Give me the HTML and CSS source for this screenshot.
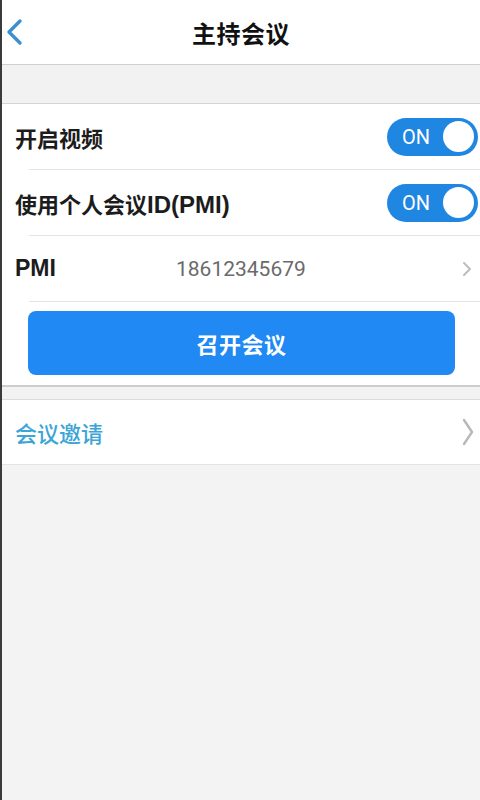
FILE: index.html
```html
<!DOCTYPE html>
<html lang="zh-CN">
<head>
<meta charset="utf-8">
<title>主持会议</title>
<link rel="stylesheet" href="styles.css">
</head>
<body>
<div class="screen">
  <header class="topbar">
    <svg class="back" width="20" height="28" viewBox="0 0 20 28"><path d="M15 3 L4 14 L15 25" fill="none" stroke="#3d8fd1" stroke-width="3.4" stroke-linecap="round" stroke-linejoin="round"/></svg>
    <h1 class="title">主持会议</h1>
  </header>
  <div class="band"></div>
  <section class="group">
    <div class="row">
      <span class="label">开启视频</span>
      <div class="toggle"><span class="on">ON</span><span class="knob"></span></div>
    </div>
    <div class="sep"></div>
    <div class="row">
      <span class="label">使用个人会议<span class="latin">ID(PMI)</span></span>
      <div class="toggle"><span class="on">ON</span><span class="knob"></span></div>
    </div>
    <div class="sep"></div>
    <div class="row">
      <span class="label pmi">PMI</span>
      <span class="value">18612345679</span>
      <svg class="chev-small" width="10" height="16" viewBox="0 0 10 16"><path d="M2 2 L8 8 L2 14" fill="none" stroke="#bdbdbd" stroke-width="2" stroke-linecap="round" stroke-linejoin="round"/></svg>
    </div>
    <div class="sep"></div>
    <div class="btn-wrap">
      <div class="btn">召开会议</div>
    </div>
  </section>
  <div class="band2"></div>
  <section class="group2">
    <div class="row invite">
      <span class="label link">会议邀请</span>
      <svg class="chev-big" width="12" height="28" viewBox="0 0 12 28"><path d="M2 2 L10 14 L2 26" fill="none" stroke="#b8b8b8" stroke-width="2.4" stroke-linecap="round" stroke-linejoin="round"/></svg>
    </div>
  </section>
</div>
</body>
</html>
```

FILE: styles.css
```css
html, body {
  margin: 0;
  padding: 0;
  background: #f3f3f3;
}
body {
  font-family: "Noto Sans CJK SC", "Noto Sans", sans-serif;
  color: #151515;
}
.screen {
  width: 478px;
  min-height: 800px;
  border-left: 2px solid #3a3a3a;
  background: #f3f3f3;
}
.topbar {
  height: 64px;
  background: #fff;
  border-bottom: 1px solid #cfcfcf;
  display: flex;
  align-items: center;
  justify-content: center;
  position: relative;
}
.back {
  position: absolute;
  left: 3px;
  top: 18px;
}
.title {
  margin: 0;
  font-size: 24px;
  font-weight: 700;
  color: #111;
  letter-spacing: 0.5px;
}
.band {
  height: 38px;
  background: #f2f2f2;
  border-bottom: 1px solid #d4d4d4;
}
.group {
  background: #fff;
  border-bottom: 2px solid #cdcdcd;
}
.row {
  height: 65px;
  display: flex;
  align-items: center;
  padding-left: 13px;
  padding-right: 2px;
}
.sep {
  height: 1px;
  background: #e4e4e4;
  margin-left: 27px;
}
.label {
  font-size: 22px;
  font-weight: 700;
  color: #1c1c1c;
  flex: none;
}
.latin {
  font-family: "Liberation Sans", "Noto Sans", sans-serif;
  font-size: 24px;
  font-weight: 700;
}
.pmi {
  font-family: "Liberation Sans", "Noto Sans", sans-serif;
  font-weight: 700;
  font-size: 23px;
  width: 161px;
}
.value {
  font-family: "Roboto", "Noto Sans", sans-serif;
  font-size: 21px;
  color: #6a6a6a;
  flex: 1;
}
.chev-small {
  margin-right: 6px;
}
.toggle {
  margin-left: auto;
  width: 91px;
  height: 38px;
  border-radius: 19px;
  background: #1f86e2;
  display: flex;
  align-items: center;
  justify-content: space-between;
  padding: 0 4px 0 15px;
  box-sizing: border-box;
}
.on {
  font-family: "Roboto", "Noto Sans", sans-serif;
  color: #fff;
  font-size: 20px;
}
.knob {
  width: 31px;
  height: 31px;
  border-radius: 50%;
  background: #fff;
}
.btn-wrap {
  padding: 9px 25px 10px 26px;
}
.btn {
  height: 64px;
  border-radius: 8px;
  background: #2189f3;
  color: #fff;
  font-size: 22px;
  font-weight: 700;
  display: flex;
  align-items: center;
  justify-content: center;
  letter-spacing: 0.5px;
}
.band2 {
  height: 12px;
  background: #f2f2f2;
  border-bottom: 1px solid #dcdcdc;
}
.group2 {
  background: #fff;
  border-bottom: 1px solid #e2e2e2;
}
.invite {
  height: 64px;
}
.link {
  color: #3aa5d6;
  font-weight: 500;
}
.chev-big {
  margin-left: auto;
  margin-right: 4px;
}
```
